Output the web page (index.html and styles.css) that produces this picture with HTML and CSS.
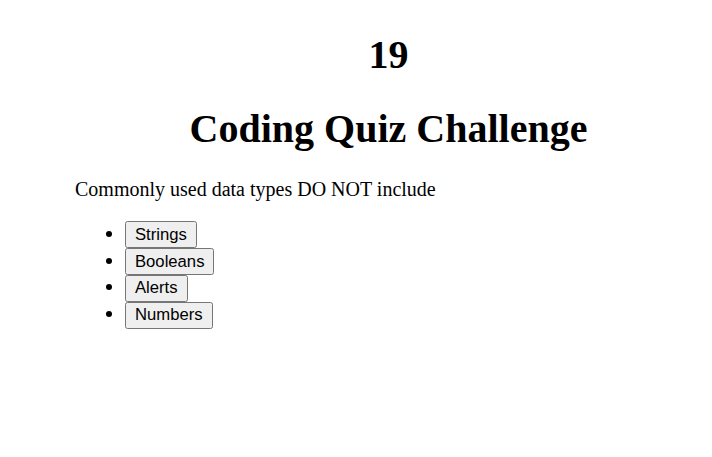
FILE: index.html
```html
<!DOCTYPE html>
<html>
<head>
<meta charset="utf-8">
<link rel="stylesheet" href="styles.css">
</head>
<body>
<main class="quiz">
  <h1 class="timer">19</h1>
  <h1 class="title">Coding Quiz Challenge</h1>
  <p class="question">Commonly used data types DO NOT include</p>
  <ul class="answers">
    <li><button class="answer">Strings</button></li>
    <li><button class="answer">Booleans</button></li>
    <li><button class="answer">Alerts</button></li>
    <li><button class="answer">Numbers</button></li>
  </ul>
</main>
</body>
</html>
```

FILE: styles.css
```css
html, body {
  background: #ffffff;
}
body {
  margin: 4px 10px 10px;
  font-family: "Liberation Serif", "Times New Roman", serif;
  font-size: 20px;
  color: #000;
}
.quiz {
  margin-left: 65px;
}
.timer, .title {
  font-size: 40px;
  font-weight: bold;
  text-align: center;
  margin: 26.8px 0;
}
.timer {
  margin-bottom: 25px;
}
.question {
  margin: 20px 0;
}
.answers {
  margin: 18px 0;
  padding-left: 50px;
  list-style: disc;
}
.answer {
  font-family: "Liberation Sans", Arial, sans-serif;
  font-size: 16.67px;
  padding: 2.4px 9px;
  background: #efefef;
  color: #000;
  border: 1.25px solid #767676;
  border-radius: 2.5px;
}
```
